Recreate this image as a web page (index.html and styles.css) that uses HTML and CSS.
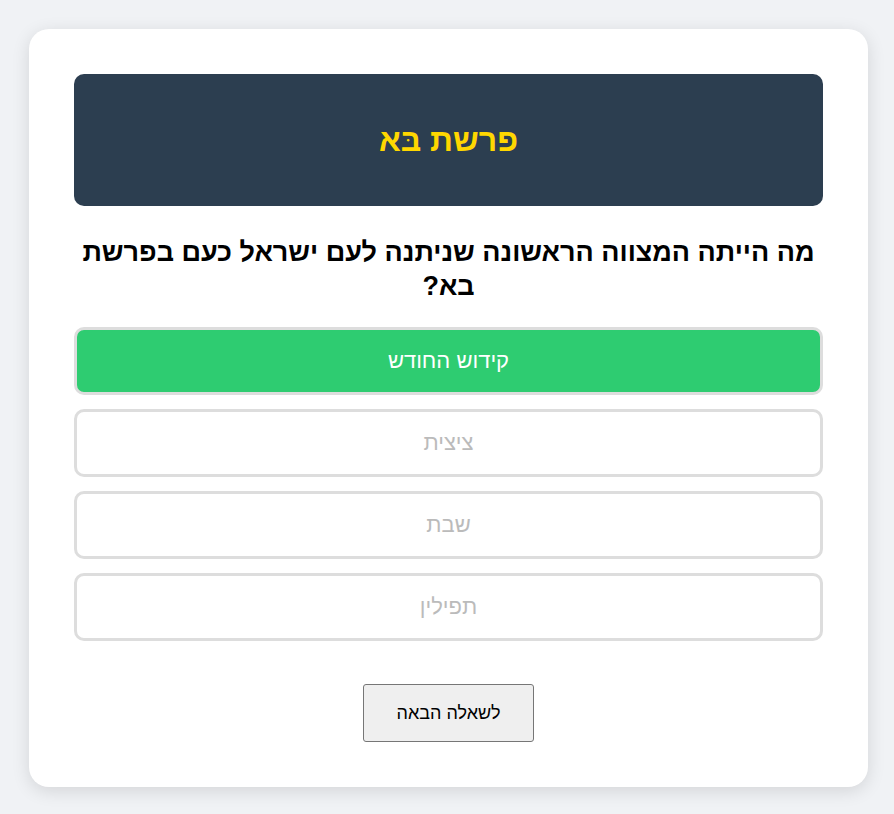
FILE: index.html
```html
<!DOCTYPE html>
<html lang="he" dir="rtl">
<head>
<meta charset="utf-8">
<title>פרשת בא</title>
<link rel="stylesheet" href="styles.css">
</head>
<body>
<div class="card">
  <header class="banner"><h1 class="title">פרשת בּא</h1></header>
  <h2 class="question">מה הייתה המצווה הראשונה שניתנה לעם ישראל כעם בפרשת בא?</h2>
  <div class="options">
    <button class="option correct">קידוש החודש</button>
    <button class="option" disabled>ציצית</button>
    <button class="option" disabled>שבת</button>
    <button class="option" disabled>תפילין</button>
  </div>
  <div class="actions"><button class="next">לשאלה הבאה</button></div>
</div>
</body>
</html>
```
FILE: styles.css
```css
html, body { margin: 0; padding: 0; }
body {
  background: #f0f2f5;
  font-family: "Liberation Sans", Arial, sans-serif;
  padding: 29px 26px 27px 29px;
}
.card {
  background: #fff;
  border-radius: 20px;
  box-shadow: 0 4px 18px rgba(0, 0, 0, 0.12);
  padding: 45px;
}
.banner {
  background: #2c3e50;
  border-radius: 10px;
  height: 132px;
  display: flex;
  align-items: center;
  justify-content: center;
}
.title {
  margin: 0;
  color: #ffd700;
  font-family: "Liberation Sans", Arial, sans-serif;
  font-size: 32px;
  font-weight: bold;
}
.question {
  margin: 29px 0 24px;
  text-align: center;
  font-size: 27px;
  line-height: 34px;
  font-weight: bold;
  color: #000;
}
.options { display: flex; flex-direction: column; gap: 14px; }
.option {
  height: 68px;
  padding: 0;
  border: 3px solid #ddd;
  border-radius: 10px;
  background: #fff;
  font-family: "Liberation Sans", Arial, sans-serif;
  font-size: 22px;
  color: #bbb;
}
.option.correct { background: #2ecc71; color: #fff; }
.actions { display: flex; justify-content: center; margin-top: 43px; }
.next {
  padding: 18px 33px;
  line-height: 20px;
  background: #efefef;
  border: 1px solid #767676;
  border-radius: 3px;
  font-family: "Liberation Sans", Arial, sans-serif;
  font-size: 18px;
  color: #000;
}
```
